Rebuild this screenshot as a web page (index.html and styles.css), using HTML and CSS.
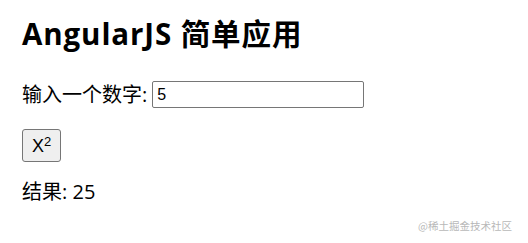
FILE: index.html
```html
<!DOCTYPE html>
<html lang="zh">
<head>
    <meta charset="UTF-8">
    <title>AngularJS 简单应用</title>
    <link rel="stylesheet" href="styles.css">
</head>
<body>
    <div class="app">
        <h2 class="title">AngularJS 简单应用</h2>
        <p class="field">输入一个数字: <input type="text" class="number" value="5"></p>
        <p class="actions"><button class="square-btn">X<sup>2</sup></button></p>
        <p class="result">结果: 25</p>
    </div>
    <div class="watermark">@稀土掘金技术社区</div>
</body>
</html>
```

FILE: styles.css
```css
* {
    margin: 0;
    padding: 0;
    box-sizing: border-box;
}

body {
    font-family: "Open Sans", "Noto Sans CJK SC", sans-serif;
    font-size: 20px;
    color: #000;
    background: #fff;
    position: relative;
    width: 528px;
    height: 243px;
    overflow: hidden;
}

.app {
    display: flex;
    flex-direction: column;
    padding: 15px 22px 0;
}

.title {
    font-size: 29.5px;
    font-weight: bold;
    line-height: 38px;
    letter-spacing: 0.9px;
}

.field {
    display: flex;
    align-items: center;
    margin-top: 28px;
    line-height: 27px;
}

.number {
    width: 212px;
    height: 27px;
    margin-left: 5px;
    padding: 0 4px;
    border: 1px solid #767676;
    border-radius: 2px;
    font-family: "Liberation Sans", Arial, sans-serif;
    font-size: 16px;
    color: #000;
}

.actions {
    margin-top: 21px;
    display: flex;
}

.square-btn {
    width: 39px;
    height: 33px;
    background: #efefef;
    border: 1px solid #767676;
    border-radius: 3px;
    font-family: "Liberation Sans", Arial, sans-serif;
    font-size: 18px;
    color: #000;
}

.square-btn sup {
    font-size: 13px;
    vertical-align: 6px;
}

.result {
    margin-top: 17px;
    line-height: 26px;
}

.watermark {
    position: absolute;
    right: 16px;
    bottom: 10px;
    font-family: "Noto Sans CJK SC", sans-serif;
    font-size: 10.5px;
    color: #b8b8b8;
}
```
